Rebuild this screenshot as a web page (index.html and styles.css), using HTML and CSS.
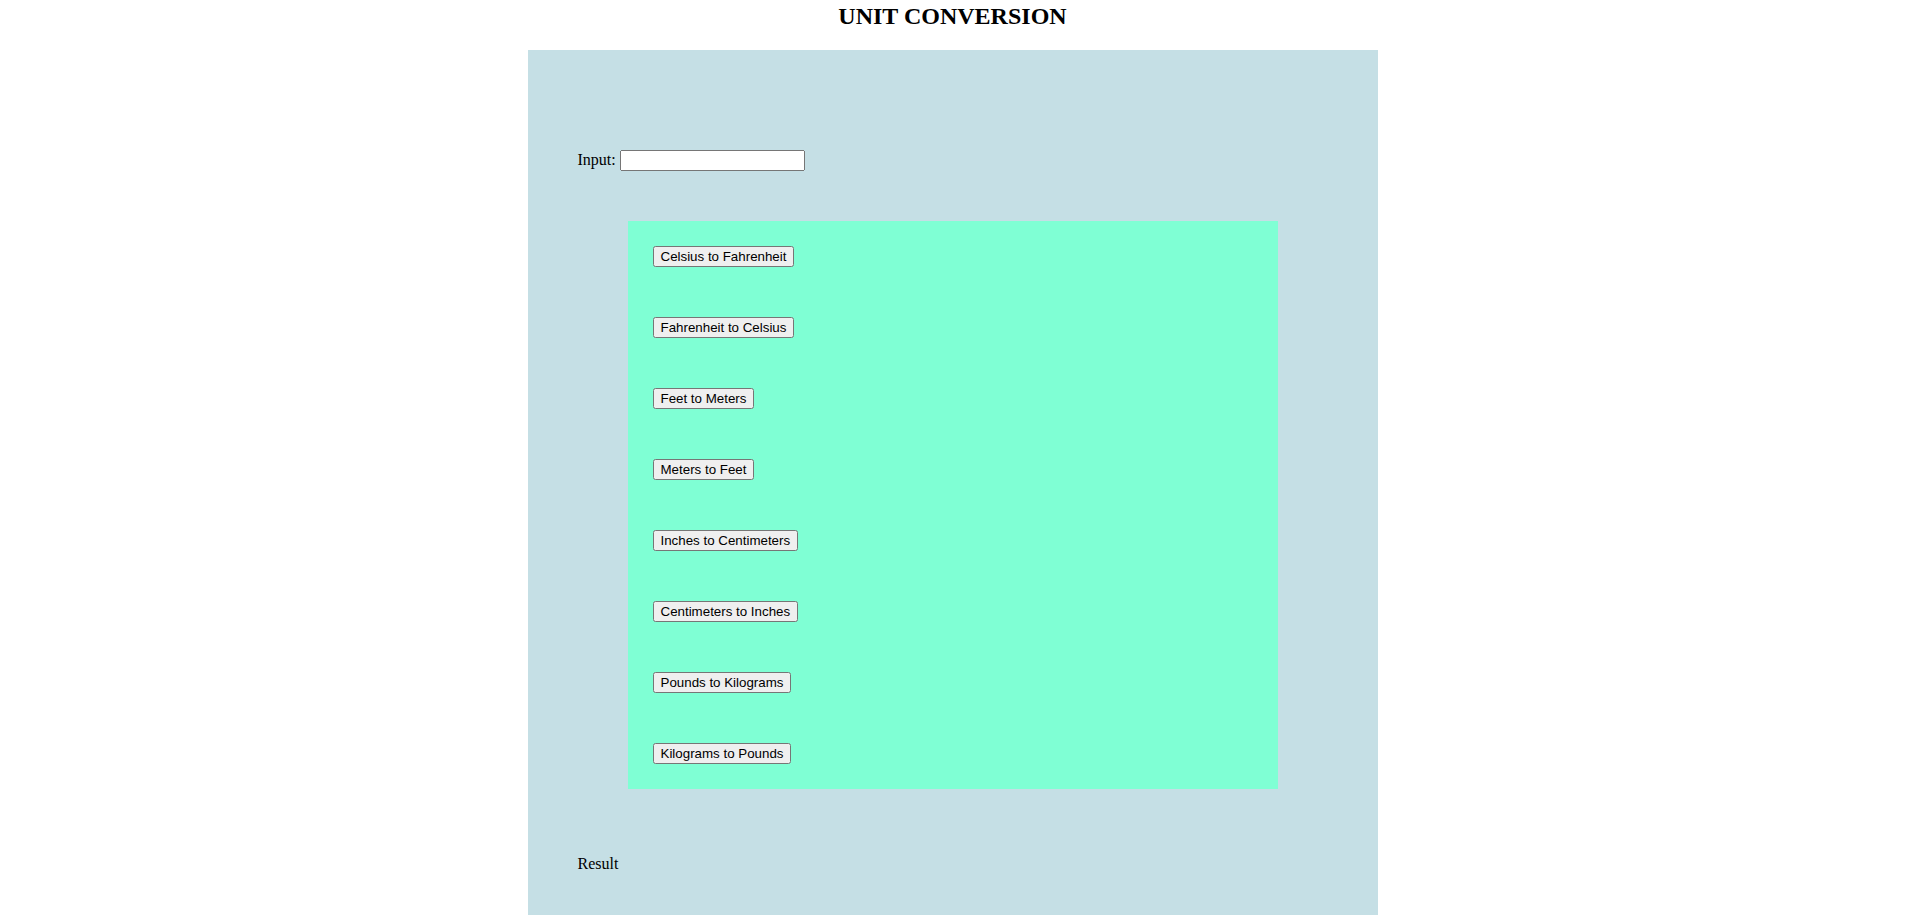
FILE: index.html
```html
<!DOCTYPE html>
<html lang="en">
<head>
<meta charset="utf-8">
<title>Unit Conversion</title>
<link rel="stylesheet" href="styles.css">
</head>
<body>
  <h1 class="title">UNIT CONVERSION</h1>
  <main class="panel">
    <div class="input-row">
      <label class="input-label" for="value">Input:</label>
      <input class="value-input" id="value" type="text">
    </div>
    <div class="buttons">
      <button class="conv-btn" type="button">Celsius to Fahrenheit</button>
      <button class="conv-btn" type="button">Fahrenheit to Celsius</button>
      <button class="conv-btn" type="button">Feet to Meters</button>
      <button class="conv-btn" type="button">Meters to Feet</button>
      <button class="conv-btn" type="button">Inches to Centimeters</button>
      <button class="conv-btn" type="button">Centimeters to Inches</button>
      <button class="conv-btn" type="button">Pounds to Kilograms</button>
      <button class="conv-btn" type="button">Kilograms to Pounds</button>
    </div>
    <p class="result">Result</p>
  </main>
</body>
</html>
```

FILE: styles.css
```css
html, body {
  margin: 0;
  padding: 0;
}

body {
  /* reserve the width of the classic scrollbar so the layout centres as in the reference */
  padding-right: 15px;
  font-family: "Liberation Serif", "Times New Roman", serif;
  font-size: 16px;
  color: #000;
  background: #fff;
}

.title {
  margin: 0 0 20px;
  padding-top: 3px;
  font-size: 24px;
  line-height: 27px;
  font-weight: bold;
  text-align: center;
}

.panel {
  box-sizing: border-box;
  width: 850px;
  min-height: 1730px;
  margin: 0 auto;
  padding: 50px;
  background: #c5dfe5;
}

.input-row {
  display: flex;
  align-items: baseline;
  gap: 4px;
  margin-top: 50px;
  line-height: 18px;
}

.value-input {
  box-sizing: border-box;
  width: 185px;
  height: 21px;
  font-family: "Liberation Sans", Arial, sans-serif;
  font-size: 13.333px;
}

.buttons {
  display: flex;
  flex-direction: column;
  align-items: flex-start;
  gap: 50px;
  margin: 50px 50px 0;
  padding: 25px;
  background: #7fffd4;
}

.conv-btn {
  font-family: "Liberation Sans", Arial, sans-serif;
  font-size: 13.333px;
}

.result {
  margin: 66px 0 0;
  line-height: 18px;
}
```
